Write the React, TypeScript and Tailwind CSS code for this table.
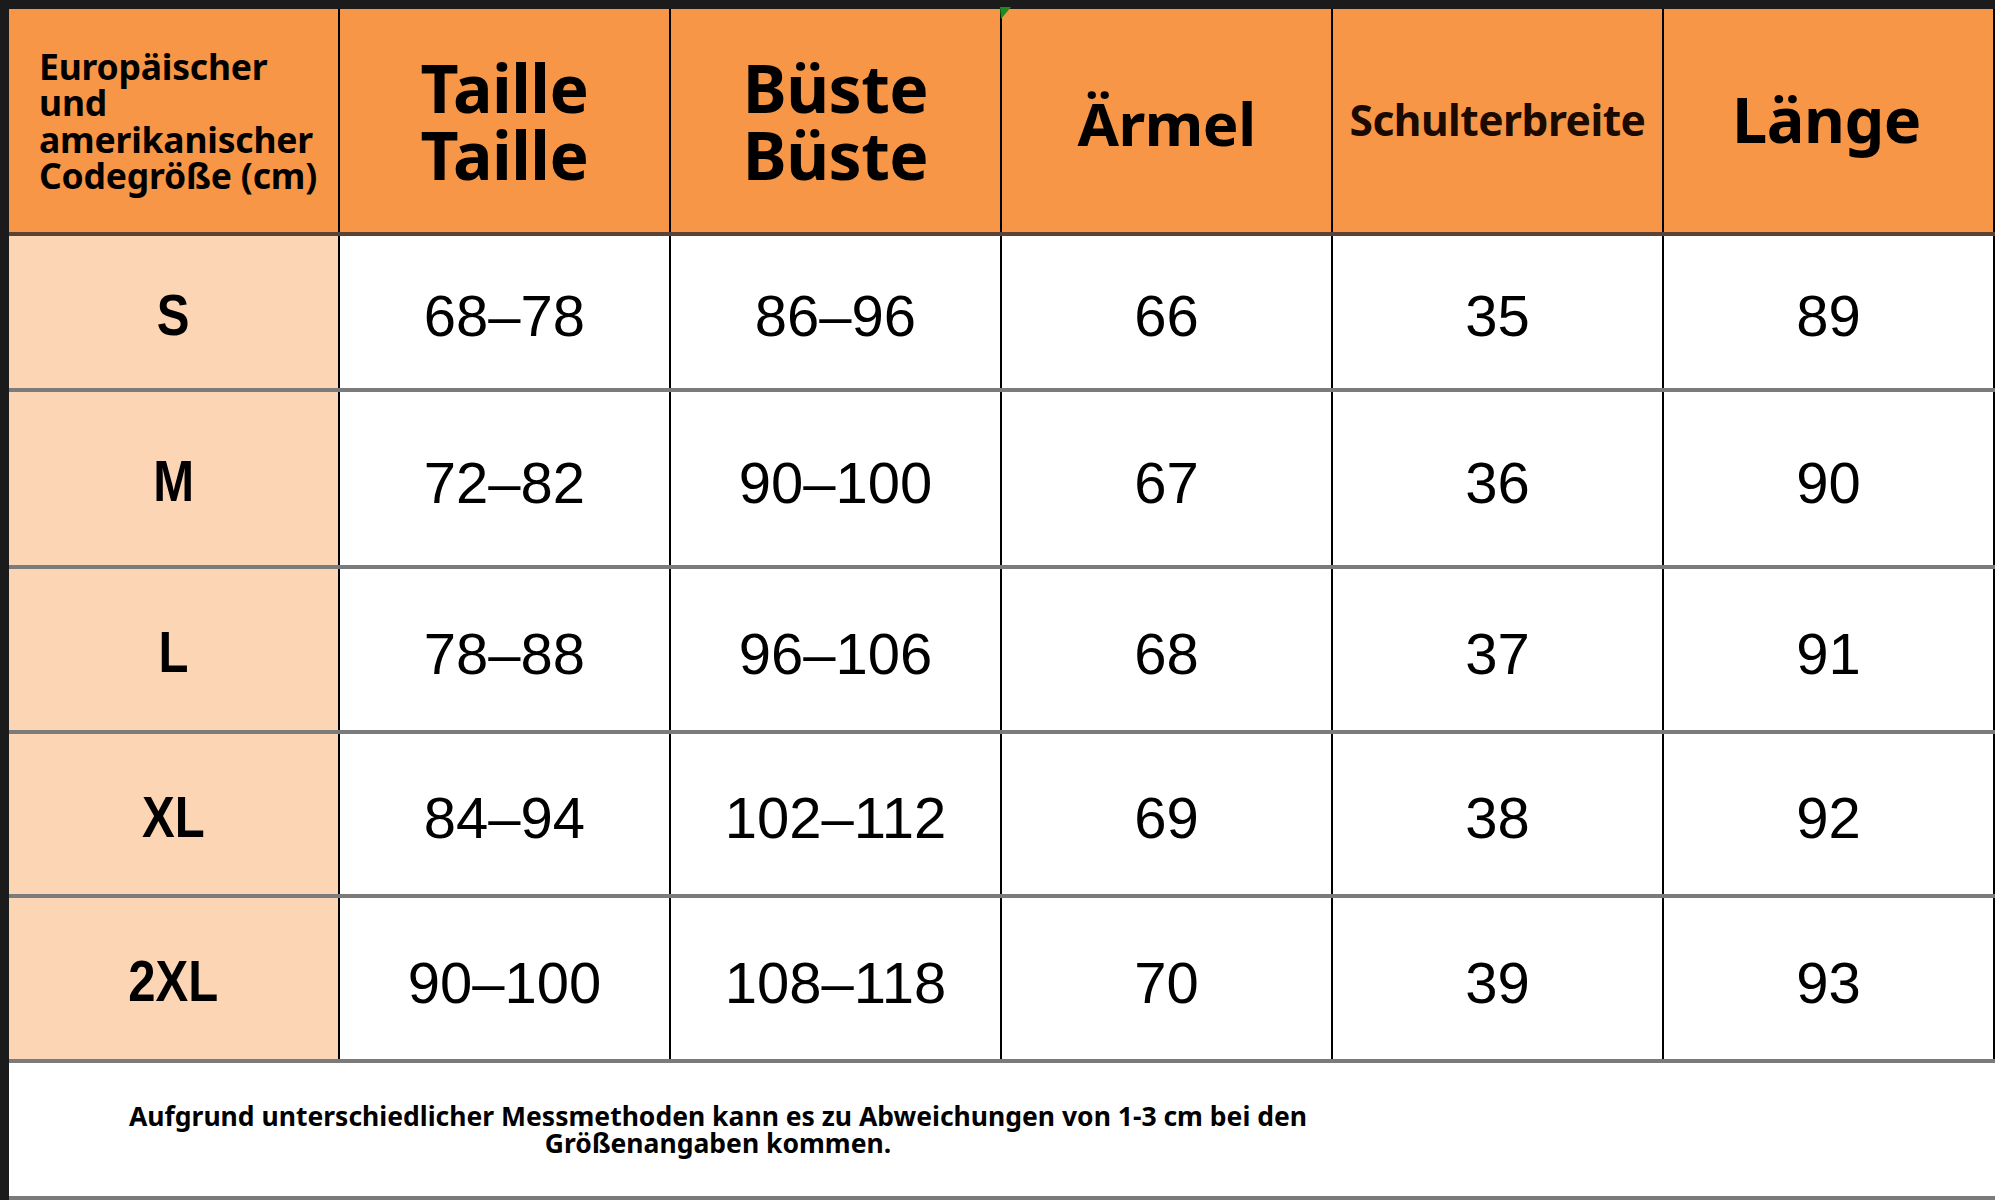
import React from "react";

const rows = [
  { size: "S", h: "h-[156px]", v: ["68–78", "86–96", "66", "35", "89"] },
  { size: "M", h: "h-[177px]", v: ["72–82", "90–100", "67", "36", "90"] },
  { size: "L", h: "h-[165px]", v: ["78–88", "96–106", "68", "37", "91"] },
  { size: "XL", h: "h-[164px]", v: ["84–94", "102–112", "69", "38", "92"] },
  { size: "2XL", h: "h-[165px]", v: ["90–100", "108–118", "70", "39", "93"] },
];

const headFont = { fontFamily: '"Noto Sans", "Open Sans", sans-serif' } as React.CSSProperties;

export default function App() {
  return (
    <div className="relative w-[1995px] h-[1200px] bg-[#1b1b1b] pt-[9px] pl-[9px] overflow-hidden">
      <div className="flex flex-col w-[1986px] bg-white">
        {/* header */}
        <div className="flex h-[227px] bg-[#f79646] border-b-4 border-[#5b4232]" style={headFont}>
          <div className="w-[331px] border-r-2 border-black flex items-center pl-[30px]">
            <div className="font-bold text-[35.5px] leading-[36.5px] text-black tracking-[-0.2px]">
              <div>Europäischer</div>
              <div>und</div>
              <div>amerikanischer</div>
              <div>Codegröße (cm)</div>
            </div>
          </div>
          <div className="w-[331px] border-r-2 border-black flex items-center justify-center">
            <div className="font-bold text-[66px] leading-[67px] text-black text-center tracking-[-0.5px]">
              <div>Taille</div>
              <div>Taille</div>
            </div>
          </div>
          <div className="w-[331px] border-r-2 border-black flex items-center justify-center">
            <div className="font-bold text-[66px] leading-[67px] text-black text-center tracking-[-0.5px]">
              <div>Büste</div>
              <div>Büste</div>
            </div>
          </div>
          <div className="w-[331px] border-r-2 border-black flex items-center justify-center pt-[4px]">
            <div className="font-bold text-[60px] leading-none text-black tracking-[-0.5px]">Ärmel</div>
          </div>
          <div className="w-[331px] border-r-2 border-black flex items-center justify-center">
            <div className="font-bold text-[42.5px] leading-none text-[#1a0a00] tracking-[-0.5px]">Schulterbreite</div>
          </div>
          <div className="w-[331px] border-r-2 border-black flex items-center justify-center pr-[4px]">
            <div className="font-bold text-[63px] leading-none text-black tracking-[-0.5px] pb-[4px]">Länge</div>
          </div>
        </div>

        {/* body rows */}
        {rows.map((r) => (
          <div key={r.size} className={`flex ${r.h} border-b-4 border-[#7b7b7b]`}>
            <div className="w-[331px] bg-[#fcd5b4] border-r-2 border-black flex items-center justify-center pt-[6px]">
              <span
                className="font-bold text-[57px] leading-none text-black inline-block scale-x-[0.86]"
                style={{ fontFamily: '"Liberation Sans Narrow", "Liberation Sans", Arial, sans-serif' }}
              >
                {r.size}
              </span>
            </div>
            {r.v.map((val, i) => (
              <div key={i} className="w-[331px] border-r-2 border-black flex items-center justify-center pt-[8px]">
                <span
                  className="text-[58px] leading-none text-black"
                  style={{ fontFamily: '"Liberation Sans", Arial, sans-serif' }}
                >
                  {val}
                </span>
              </div>
            ))}
          </div>
        ))}

        {/* footer */}
        <div className="h-[137px] bg-white border-b-4 border-[#7b7b7b] flex items-center">
          <div
            className="w-[1418px] text-center font-bold text-[26.5px] leading-[27px] text-black"
            style={headFont}
          >
            Aufgrund unterschiedlicher Messmethoden kann es zu Abweichungen von 1-3 cm bei den
            <br />
            Größenangaben kommen.
          </div>
        </div>
      </div>

      {/* small green mark at top */}
      <svg className="absolute left-[998px] top-[7px]" width="14" height="14" viewBox="0 0 14 14">
        <polygon points="2,0 13,0 3,12" fill="#1f8a1f" />
      </svg>
    </div>
  );
}
